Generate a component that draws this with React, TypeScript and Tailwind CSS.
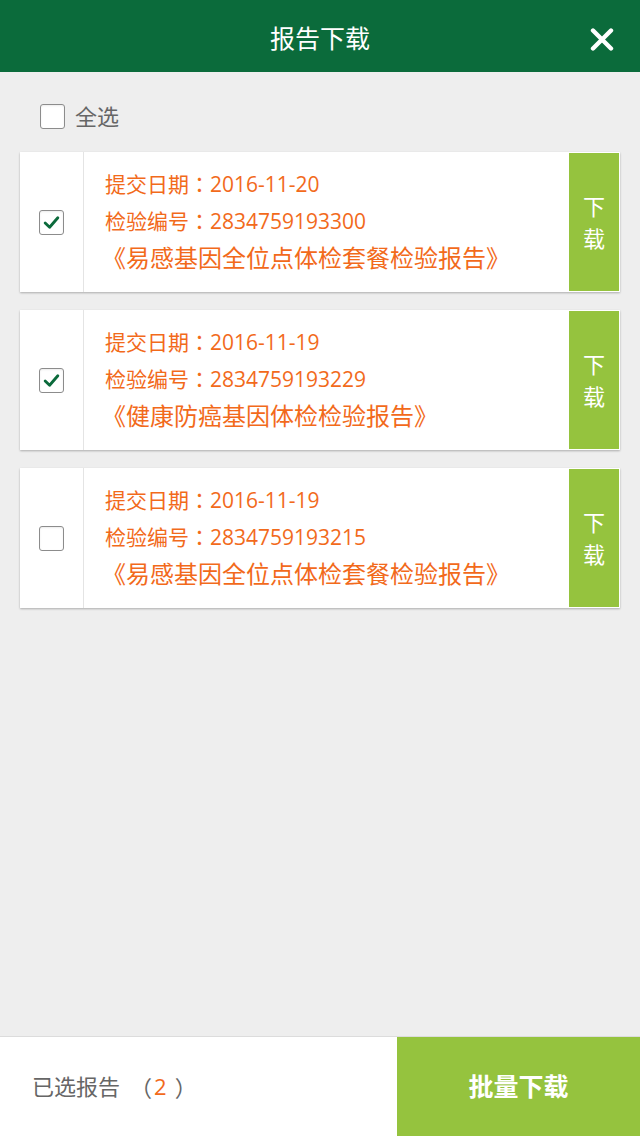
import React from "react";

const font = { fontFamily: '"Open Sans", "Noto Sans CJK SC", sans-serif' };
const tc = { fontFamily: '"Noto Sans CJK TC", sans-serif' };

function Check({ checked }: { checked: boolean }) {
  return (
    <div className="w-[25px] h-[25px] rounded-[3px] border border-[#8c8c8c] bg-white flex items-center justify-center shadow-[inset_0_1px_2px_rgba(0,0,0,0.08)]">
      {checked && (
        <svg width="19" height="19" viewBox="0 0 18 18">
          <path d="M3 9.5 L7.2 13.5 L15 4.5" fill="none" stroke="#0b6a3b" strokeWidth="2.7" strokeLinecap="round" strokeLinejoin="round" />
        </svg>
      )}
    </div>
  );
}

const items = [
  { date: "2016-11-20", no: "2834759193300", name: "《易感基因全位点体检套餐检验报告》", checked: true },
  { date: "2016-11-19", no: "2834759193229", name: "《健康防癌基因体检检验报告》", checked: true },
  { date: "2016-11-19", no: "2834759193215", name: "《易感基因全位点体检套餐检验报告》", checked: false },
];

export default function App() {
  return (
    <div className="w-[640px] h-[1136px] bg-[#eeeeee] flex flex-col" style={font}>
      <div className="h-[72px] bg-[#0b6b3b] flex items-center justify-center relative shrink-0 pt-[5px]">
        <span className="text-white text-[25px]">报告下载</span>
        <svg className="absolute right-[26px] top-[28px]" width="24" height="23" viewBox="0 0 24 23">
          <path d="M3 2.5 L21 20.5 M21 2.5 L3 20.5" stroke="#fff" strokeWidth="4.4" strokeLinecap="round" />
        </svg>
      </div>
      <div className="flex items-center pl-10 h-[80px] pt-[9px] shrink-0">
        <Check checked={false} />
        <span className="ml-[10px] text-[22px] text-[#666]">全选</span>
      </div>
      <div className="flex flex-col gap-[18px] px-5">
        {items.map((it, i) => (
          <div key={i} className="h-[140px] bg-white flex shadow-[0_1px_2px_rgba(0,0,0,0.28)]">
            <div className="w-[64px] border-r border-[#e4e4e4] flex items-center justify-center shrink-0">
              <Check checked={it.checked} />
            </div>
            <div className="flex-1 flex flex-col justify-center pl-[21px] text-[#f26a1b] pb-[2px]">
              <div className="text-[21px] leading-[36px]">提交日期<span style={tc}>：</span>{it.date}</div>
              <div className="text-[21px] leading-[36px]">检验编号<span style={tc}>：</span>{it.no}</div>
              <div className="text-[24px] leading-[38px] -ml-[3px]">{it.name}</div>
            </div>
            <div className="w-[50px] my-[1px] mr-[1px] bg-[#95c33e] flex flex-col items-center justify-center text-white text-[22px] leading-[32px] shrink-0">
              <span>下</span>
              <span>载</span>
            </div>
          </div>
        ))}
      </div>
      <div className="flex-1" />
      <div className="h-[100px] shrink-0 flex border-t border-[#dcdcdc] bg-white">
        <div className="flex-1 flex items-center pl-[32px] text-[22px] text-[#666]">
          已选报告
          <span className="ml-[10px]" style={tc}>（</span>
          <span className="text-[#f26a1b] pl-[2px] pr-[8px]">2</span>
          <span style={tc}>）</span>
        </div>
        <div className="w-[243px] bg-[#95c33e] flex items-center justify-center text-white text-[25px] font-bold">
          批量下载
        </div>
      </div>
    </div>
  );
}
